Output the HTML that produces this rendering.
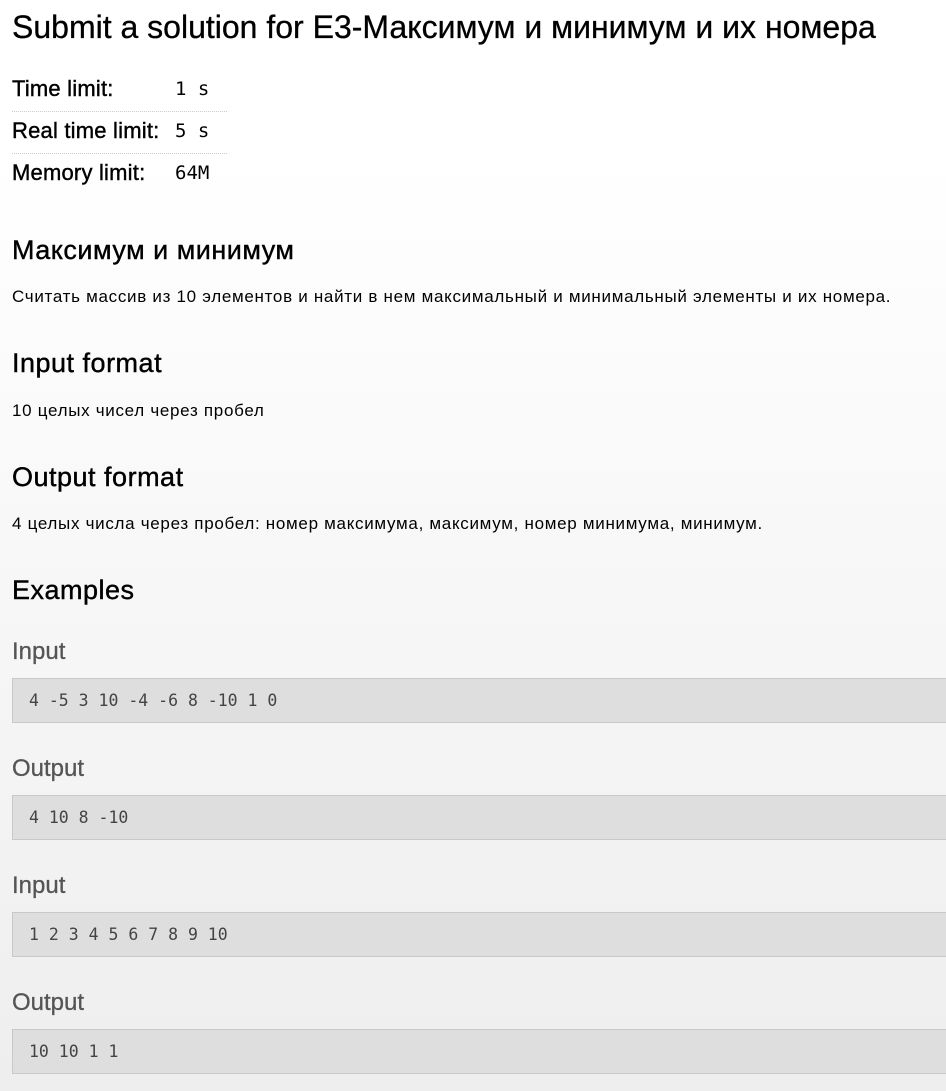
<!DOCTYPE html>
<html><head><meta charset="utf-8"><style>
html,body{margin:0;padding:0}
body{width:946px;height:1091px;overflow:hidden;position:relative;background:linear-gradient(#fff 0px,#fff 150px,#eee 1091px);font-family:"Liberation Sans","DejaVu Sans",sans-serif;color:#000}
.a{position:absolute;left:12px;white-space:nowrap}
h1{font-size:32px;font-weight:normal;margin:0;-webkit-text-stroke:0.3px #000}
.lab{font-size:22px;letter-spacing:0.2px;-webkit-text-stroke:0.4px #000}
.val{font-family:"DejaVu Sans Mono","Liberation Mono",monospace;font-size:19px;left:175px}
.line{position:absolute;left:12px;width:215px;border-top:1px dotted #ccc}
.h2{font-size:27px;letter-spacing:0.5px;-webkit-text-stroke:0.4px #000}
.p{font-size:17px;letter-spacing:0.7px}
.ex{font-size:24px;color:#555;-webkit-text-stroke:0.3px #555}
.pre{position:absolute;left:12px;width:940px;background:#dedede;border:1px solid #c8c8c8;font-family:"DejaVu Sans Mono","Liberation Mono",monospace;font-size:16.5px;color:#444;line-height:43px;padding-left:16px;box-sizing:border-box;height:45px}
</style></head><body>
<h1 class="a" style="top:9px">Submit a solution for E3-Максимум и минимум и их номера</h1>
<div class="a lab" style="top:76px">Time limit:</div><div class="a val" style="top:78px">1 s</div>
<div class="line" style="top:111px"></div>
<div class="a lab" style="top:118px">Real time limit:</div><div class="a val" style="top:120px">5 s</div>
<div class="line" style="top:153px"></div>
<div class="a lab" style="top:160px">Memory limit:</div><div class="a val" style="top:162px">64M</div>
<div class="a h2" style="top:235px">Максимум и минимум</div>
<div class="a p" style="top:287px">Считать массив из 10 элементов и найти в нем максимальный и минимальный элементы и их номера.</div>
<div class="a h2" style="top:348px">Input format</div>
<div class="a p" style="top:401px">10 целых чисел через пробел</div>
<div class="a h2" style="top:462px">Output format</div>
<div class="a p" style="top:514px">4 целых числа через пробел: номер максимума, максимум, номер минимума, минимум.</div>
<div class="a h2" style="top:575px">Examples</div>
<div class="a ex" style="top:638px">Input</div>
<div class="pre" style="top:678px">4 -5 3 10 -4 -6 8 -10 1 0</div>
<div class="a ex" style="top:755px">Output</div>
<div class="pre" style="top:795px">4 10 8 -10</div>
<div class="a ex" style="top:872px">Input</div>
<div class="pre" style="top:912px">1 2 3 4 5 6 7 8 9 10</div>
<div class="a ex" style="top:989px">Output</div>
<div class="pre" style="top:1029px">10 10 1 1</div>
</body></html>
